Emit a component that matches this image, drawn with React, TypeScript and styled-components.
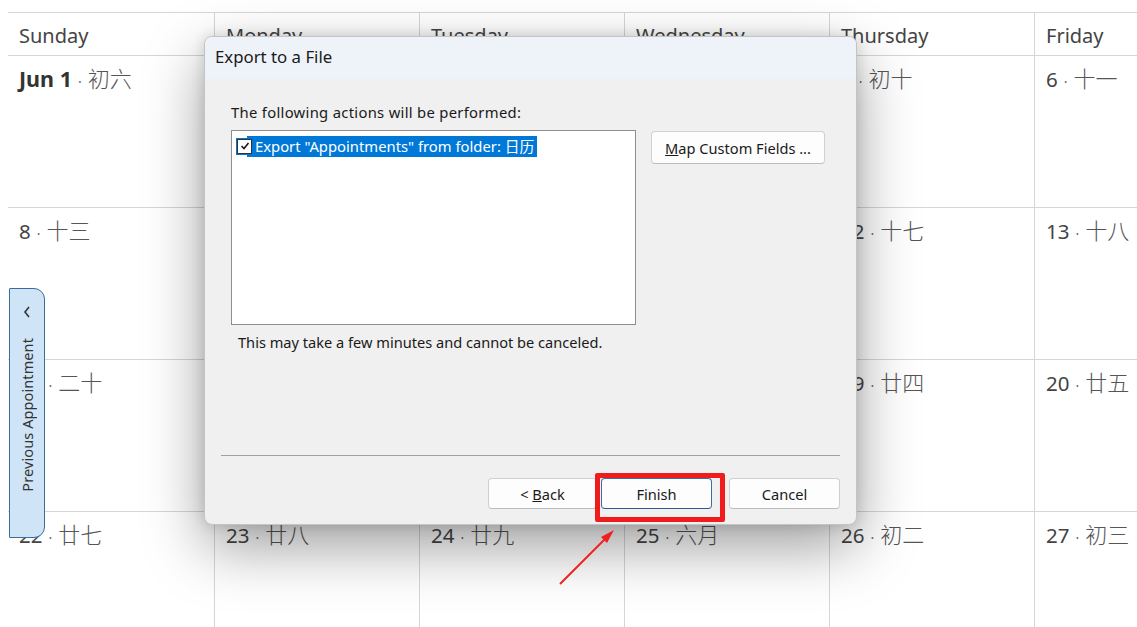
import { FC } from "react";
import styled, { createGlobalStyle } from "styled-components";

const GlobalStyle = createGlobalStyle`
    html, body {
        margin: 0;
        padding: 0;
        background: #ffffff;
        overflow: hidden;
    }
    * {
        box-sizing: border-box;
    }
`;

const FONT = `"Noto Sans", "Noto Sans CJK SC", sans-serif`;

const days = ["Sunday", "Monday", "Tuesday", "Wednesday", "Thursday", "Friday", "Saturday"];

const weeks: { day: string; lunar: string; bold?: boolean }[][] = [
    [
        { day: "Jun 1", lunar: "初六", bold: true },
        { day: "2", lunar: "初七" },
        { day: "3", lunar: "初八" },
        { day: "4", lunar: "初九" },
        { day: "5", lunar: "初十" },
        { day: "6", lunar: "十一" },
        { day: "7", lunar: "十二" },
    ],
    [
        { day: "8", lunar: "十三" },
        { day: "9", lunar: "十四" },
        { day: "10", lunar: "十五" },
        { day: "11", lunar: "十六" },
        { day: "12", lunar: "十七" },
        { day: "13", lunar: "十八" },
        { day: "14", lunar: "十九" },
    ],
    [
        { day: "15", lunar: "二十" },
        { day: "16", lunar: "廿一" },
        { day: "17", lunar: "廿二" },
        { day: "18", lunar: "廿三" },
        { day: "19", lunar: "廿四" },
        { day: "20", lunar: "廿五" },
        { day: "21", lunar: "廿六" },
    ],
    [
        { day: "22", lunar: "廿七" },
        { day: "23", lunar: "廿八" },
        { day: "24", lunar: "廿九" },
        { day: "25", lunar: "六月" },
        { day: "26", lunar: "初二" },
        { day: "27", lunar: "初三" },
        { day: "28", lunar: "初四" },
    ],
];

export const App: FC = () => {
    return (
        <Page>
            <GlobalStyle />
            <Calendar>
                <HeaderRow>
                    {days.map((d, i) => (
                        <HeaderCell key={d} $first={i === 0}>
                            {d}
                        </HeaderCell>
                    ))}
                </HeaderRow>
                {weeks.map((week, w) => (
                    <WeekRow key={w}>
                        {week.map((cell, i) => (
                            <DayCell key={i} $first={i === 0}>
                                <DayNum $bold={cell.bold}>{cell.day}</DayNum>
                                <Dot>·</Dot>
                                <Lunar>{cell.lunar}</Lunar>
                            </DayCell>
                        ))}
                    </WeekRow>
                ))}
            </Calendar>

            <SideTab>
                <Chevron viewBox="0 0 10 14">
                    <path d="M7 2 L3 7 L7 12" fill="none" stroke="#333" strokeWidth="1.6" />
                </Chevron>
                <SideLabel>Previous Appointment</SideLabel>
            </SideTab>

            <Dialog>
                <TitleBar>Export to a File</TitleBar>
                <DialogBody>
                    <Label>The following actions will be performed:</Label>
                    <ListRow>
                        <ListBox>
                            <ListItem>
                                <CheckBox>
                                    <svg width="10" height="10" viewBox="0 0 10 10">
                                        <path
                                            d="M1.5 5 L4 7.5 L8.5 2"
                                            fill="none"
                                            stroke="#1a1a1a"
                                            strokeWidth="1.6"
                                        />
                                    </svg>
                                </CheckBox>
                                <ItemText>Export "Appointments" from folder: 日历</ItemText>
                            </ListItem>
                        </ListBox>
                        <MapButton>
                            <u>M</u>ap Custom Fields ...
                        </MapButton>
                    </ListRow>
                    <Note>This may take a few minutes and cannot be canceled.</Note>
                    <Spacer />
                    <Separator />
                    <ButtonRow>
                        <WizButton $width={109}>
                            &lt; <u>B</u>ack
                        </WizButton>
                        <WizButton $width={111} $default>
                            Finish
                        </WizButton>
                        <WizButton $width={111} $gapLeft={17}>
                            Cancel
                        </WizButton>
                    </ButtonRow>
                </DialogBody>
            </Dialog>

            <Highlight />
            <Arrow viewBox="0 0 80 80" width="80" height="80">
                <line x1="6" y1="64" x2="54" y2="16" stroke="#ee2020" strokeWidth="2" />
                <path d="M60 10 L47 17 L53 23 Z" fill="#ee2020" />
            </Arrow>
        </Page>
    );
};

export default App;

const Page = styled.div`
    position: relative;
    width: 1137px;
    height: 627px;
    overflow: hidden;
    background: #ffffff;
    font-family: ${FONT};
`;

const Calendar = styled.div`
    padding: 12px 0 0 8px;
    display: flex;
    flex-direction: column;
`;

const HeaderRow = styled.div`
    display: grid;
    grid-template-columns: 206px repeat(6, 205px);
    height: 44px;
    border-top: 1px solid #d6d6d6;
    border-bottom: 1px solid #d6d6d6;
`;

const HeaderCell = styled.div<{ $first?: boolean }>`
    border-left: ${(p) => (p.$first ? "none" : "1px solid #d6d6d6")};
    padding: 10px 0 0 11px;
    font-size: 20px;
    color: #444;
    line-height: 26px;
`;

const WeekRow = styled.div`
    display: grid;
    grid-template-columns: 206px repeat(6, 205px);
    height: 152px;
    border-bottom: 1px solid #d6d6d6;
`;

const DayCell = styled.div<{ $first?: boolean }>`
    border-left: ${(p) => (p.$first ? "none" : "1px solid #d6d6d6")};
    padding: 7px 0 0 11px;
    display: flex;
    align-items: baseline;
    gap: 6px;
    font-size: 20.5px;
    line-height: 28px;
    color: #444;
`;

const DayNum = styled.span<{ $bold?: boolean }>`
    font-weight: ${(p) => (p.$bold ? 700 : 400)};
    color: ${(p) => (p.$bold ? "#333" : "#444")};
    font-size: ${(p) => (p.$bold ? "21.5px" : "20.5px")};
`;

const Dot = styled.span`
    font-size: 14px;
    color: #666;
`;

const Lunar = styled.span`
    font-family: "Noto Sans CJK SC", sans-serif;
    font-weight: 300;
    font-size: 22px;
    color: #555;
`;

const SideTab = styled.div`
    position: absolute;
    left: 9px;
    top: 288px;
    width: 36px;
    height: 250px;
    background: #cfe4f7;
    border: 1px solid #3c6c9c;
    border-radius: 1px 11px 11px 1px;
    display: flex;
    flex-direction: column;
    align-items: center;
    padding-top: 16px;
    gap: 19px;
`;

const Chevron = styled.svg`
    width: 10px;
    height: 14px;
`;

const SideLabel = styled.div`
    writing-mode: vertical-rl;
    transform: rotate(180deg);
    font-size: 14.5px;
    color: #333;
    white-space: nowrap;
    letter-spacing: 0.1px;
`;

const Dialog = styled.div`
    position: absolute;
    left: 204px;
    top: 36px;
    width: 653px;
    height: 489px;
    border-radius: 8px;
    border: 1px solid #c4c4c4;
    background: #f0f0f0;
    box-shadow: 0 22px 60px rgba(0, 0, 0, 0.38), 0 0 14px rgba(0, 0, 0, 0.14);
    display: flex;
    flex-direction: column;
    overflow: hidden;
`;

const TitleBar = styled.div`
    height: 42px;
    background: #eef3f9;
    padding: 0 0 4px 10px;
    display: flex;
    align-items: center;
    font-size: 16.8px;
    color: #1a1a1a;
`;

const DialogBody = styled.div`
    flex: 1;
    display: flex;
    flex-direction: column;
    padding: 23px 16px 15px 26px;
    font-family: ${FONT};
`;

const Label = styled.div`
    font-size: 14.8px;
    line-height: 20px;
    color: #1a1a1a;
    margin-bottom: 8px;
    letter-spacing: 0.3px;
`;

const ListRow = styled.div`
    display: flex;
    align-items: flex-start;
    gap: 15px;
`;

const ListBox = styled.div`
    width: 405px;
    height: 195px;
    background: #ffffff;
    border: 1px solid #8e8e8e;
    padding: 4px 0 0 5px;
`;

const ListItem = styled.div`
    display: flex;
    align-items: center;
    height: 22px;
`;

const CheckBox = styled.div`
    width: 15px;
    height: 15px;
    background: #ffffff;
    border: 1px solid #333;
    box-shadow: 0 0 0 1px #0078d7;
    display: flex;
    align-items: center;
    justify-content: center;
    margin-right: 1px;
    position: relative;
    z-index: 1;
`;

const ItemText = styled.div`
    background: #0078d7;
    color: #ffffff;
    font-size: 14.8px;
    height: 21px;
    line-height: 21px;
    padding: 0 3px 0 8px;
    margin-left: -6px;
`;

const MapButton = styled.button`
    width: 174px;
    height: 33px;
    margin-top: 1px;
    background: #fdfdfd;
    border: 1px solid #d0d0d0;
    border-bottom-color: #bcbcbc;
    border-radius: 4px;
    font-family: ${FONT};
    font-size: 14.6px;
    color: #1a1a1a;
    padding: 0;
`;

const Note = styled.div`
    margin: 7px 0 0 7px;
    font-size: 14.6px;
    line-height: 20px;
    color: #1a1a1a;
`;

const Spacer = styled.div`
    flex: 1;
`;

const Separator = styled.div`
    height: 1px;
    background: #a0a0a0;
    margin-left: -10px;
    margin-bottom: 22px;
`;

const ButtonRow = styled.div`
    display: flex;
    justify-content: flex-end;
    gap: 4px;
`;

const WizButton = styled.button<{ $width: number; $default?: boolean; $gapLeft?: number }>`
    width: ${(p) => p.$width}px;
    height: 31px;
    margin-left: ${(p) => (p.$gapLeft ? p.$gapLeft - 4 : 0)}px;
    background: #fdfdfd;
    border: 1px solid ${(p) => (p.$default ? "#3a6ea5" : "#d0d0d0")};
    border-bottom-color: ${(p) => (p.$default ? "#2b5b8f" : "#bcbcbc")};
    border-radius: 4px;
    font-family: ${FONT};
    font-size: 14.6px;
    color: #1a1a1a;
    padding: 0;
`;

const Highlight = styled.div`
    position: absolute;
    left: 595px;
    top: 473px;
    width: 130px;
    height: 49px;
    border: 5px solid #f01c1c;
    border-radius: 2px;
`;

const Arrow = styled.svg`
    position: absolute;
    left: 554px;
    top: 520px;
`;
